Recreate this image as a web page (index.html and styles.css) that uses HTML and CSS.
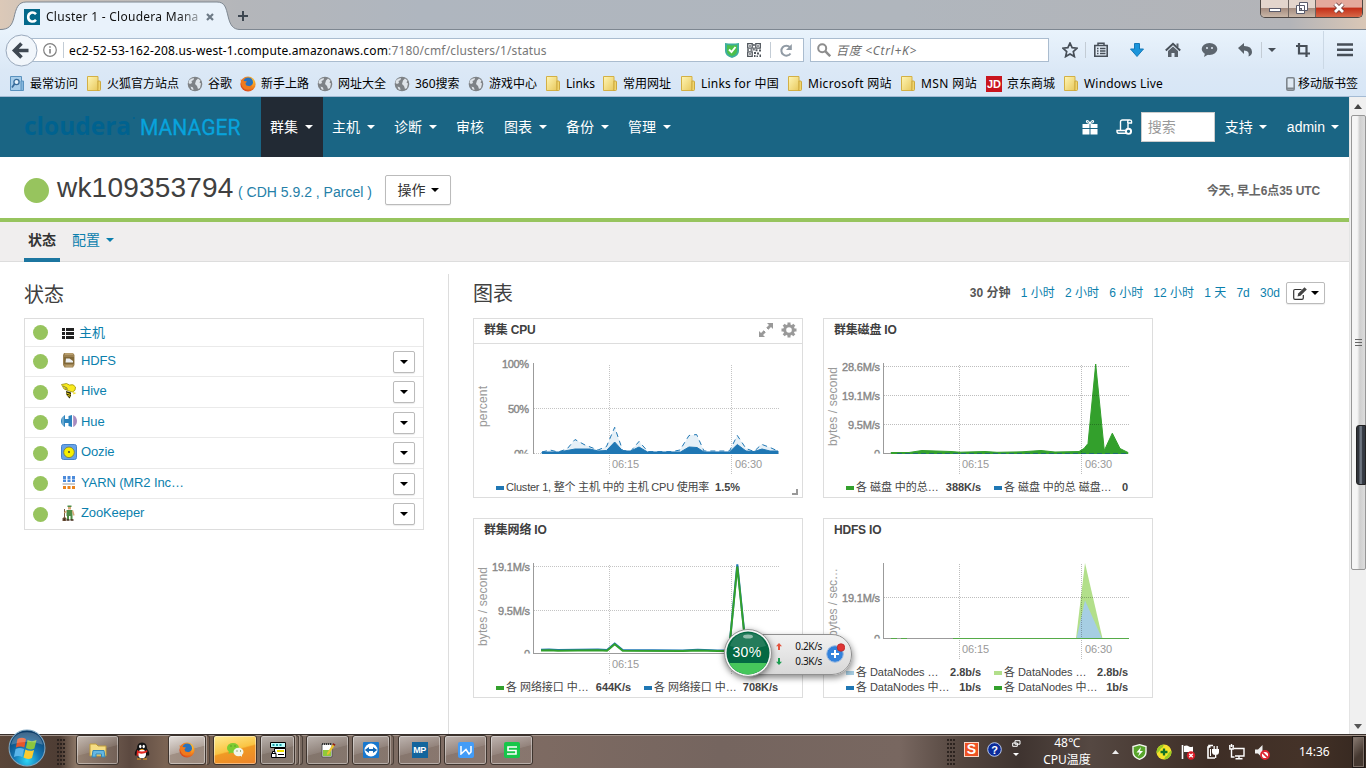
FILE: index.html
```html
<!DOCTYPE html>
<html lang="zh-CN">
<head>
<meta charset="utf-8">
<title>Cluster 1 - Cloudera Manager</title>
<link rel="stylesheet" href="styles.css">
</head>
<body>
<svg class="defs" width="0" height="0" aria-hidden="true">
  <defs>
    <linearGradient id="folderFill" x1="0" y1="0" x2="1" y2="1"><stop offset="0" stop-color="#fff6b5"/><stop offset="1" stop-color="#e8c85c"/></linearGradient>
    <radialGradient id="orb" cx=".5" cy=".85" r=".8"><stop offset="0" stop-color="#2fd5f5"/><stop offset=".45" stop-color="#1577b5"/><stop offset="1" stop-color="#0b3c68"/></radialGradient>
    <radialGradient id="foxFill" cx=".7" cy=".3" r=".8"><stop offset="0" stop-color="#ffd23a"/><stop offset=".5" stop-color="#f58a1f"/><stop offset="1" stop-color="#d6401a"/></radialGradient>
    <symbol id="folder" viewBox="0 0 16 16"><path d="M1.500.500h10.500v14H1.500z" fill="url(#folderFill)" stroke="#d3b045"/><path d="M12 5h1.500q1 0 1 1v7.500q0 1-1 1H11q1.500-.500 1-2z" fill="#f0d56d" stroke="#cda93f"/></symbol>
    <symbol id="globe" viewBox="0 0 16 16"><circle cx="8" cy="8" r="7.300" fill="#7e8286"/><path d="M2 4.500q2-2.500 5-2.500L6.500 4 4.500 5 5 7 3 8 1.500 7zM9 4.500l2-2 2.500 2-1 2 1.500 1-1 4.500-2 1-1-3-2-2zM3.500 10.500l2.500 1 .5 2.500-2-.8z" fill="#dfe4e9"/></symbol>
    <symbol id="fox" viewBox="0 0 16 16"><circle cx="8" cy="8" r="7.600" fill="url(#foxFill)"/><circle cx="8.200" cy="6.200" r="4.800" fill="#2a72bd"/><path d="M.6 3.200 4 5l3 .4-1.600 2 1 2.200 3.400.6 2.600-1.800q-.6 5-5.400 5.200Q1 13 .6 3.200z" fill="#f07a1c"/></symbol>
    <symbol id="caret" viewBox="0 0 8 4"><path d="M0 0h8L4 4z" fill="currentColor"/></symbol>
  </defs>
</svg>

<header class="titlebar">
  <div class="tab">
    <svg class="tab-shape" width="240" height="30" viewBox="0 0 240 30"><path d="M0 29.500c9 0 12-4 14-12 2-9 4-15.500 12-15.500h191c8 0 9 6 11 14 2 9 5 13.500 12 13.500V31H0z" fill="#e9f2fb" stroke="#7e8791"/></svg>
    <svg class="tab-ico" width="16" height="16" viewBox="0 0 16 16"><rect width="16" height="16" fill="#03688a"/><path d="M12 5.200Q9.800 2.800 7 3.700 4.200 4.800 4.200 8t2.800 4.300Q9.800 13.200 12 10.800" fill="none" stroke="#fff" stroke-width="2.600"/></svg>
    <span class="tab-text">Cluster 1 - Cloudera Mana</span>
    <svg width="8" height="8" viewBox="0 0 8 8"><path d="M1 1l6 6M7 1L1 7" stroke="#6d7a86" stroke-width="2.200"/></svg>
  </div>
  <svg class="newtab" width="10" height="10" viewBox="0 0 10 10"><path d="M5 0v10M0 5h10" stroke="#3d4650" stroke-width="2"/></svg>
  <div class="win-buttons">
    <span class="wb"><svg width="14" height="12"><rect x="1.500" y="6.500" width="11" height="3" fill="#fff" stroke="#595b6b"/></svg></span>
    <span class="wb"><svg width="12" height="12"><path d="M3.500.5h8v8h-8zM.5 3.500h8v8h-8z" fill="#fff" stroke="#595b6b"/><rect x="3.500" y="6.500" width="2" height="2" fill="#aaa" stroke="#595b6b"/></svg></span>
    <span class="wb close"><svg width="14" height="12" viewBox="0 0 14 12"><path d="M3 2l8 8M11 2l-8 8" stroke="#6b3a3a" stroke-width="4.400"/><path d="M3 2l8 8M11 2l-8 8" stroke="#fff" stroke-width="2.800"/></svg></span>
  </div>
</header>

<nav class="toolbar">
  <svg class="back" width="33" height="33" viewBox="0 0 33 33"><circle cx="16.500" cy="16.500" r="15.500" fill="#f1f6fb" stroke="#9aa9bc"/><path d="M16.500 9.500l-7 7 7 7M10 16.500h13.500" fill="none" stroke="#3f4852" stroke-width="3.600"/></svg>
  <div class="urlbar">
    <svg width="14" height="14" viewBox="0 0 14 14"><circle cx="7" cy="7" r="6.300" fill="none" stroke="#808080" stroke-width="1.200"/><path d="M7 6v4.500M7 3.200v1.600" stroke="#808080" stroke-width="1.600"/></svg>
    <i class="sep"></i>
    <span class="url">ec2-52-53-162-208.us-west-1.compute.amazonaws.com<span class="dim">:7180/cmf/clusters/1/status</span></span>
    <svg class="shield" width="14" height="15" viewBox="0 0 14 15"><path d="M0 0q7 1 14 0v8q0 5-7 7-7-2-7-7z" fill="#3fae9d"/><path d="M2 2q5 .8 10 0v6q0 3.600-5 5-5-1.400-5-5z" fill="#4cc04a"/><path d="M4 6.500l2.500 2.500L10.500 4" fill="none" stroke="#fff" stroke-width="1.900"/></svg>
    <svg class="qr" width="14" height="14" viewBox="0 0 14 14"><path d="M.7.7h4.500v4.500H.7zM8.800.7h4.500v4.500H8.800zM.7 8.800h4.500v4.500H.7z" fill="none" stroke="#50565c" stroke-width="1.300"/><path d="M2.200 2.200h1.600v1.600H2.200zM10.200 2.200h1.600v1.600h-1.600zM2.200 10.200h1.600v1.600H2.200zM6.200 1h1.500v2H6.200zM6.200 4.500h1.500v3H6.200zM0 6.300h2v1.400H0zM3.500 6.300h2v1.400h-2zM8.500 6.300h2v2h-2zM12 6.500h2v2h-2zM7 9h2v2H7zM10 9.500h2v2h-2zM12.500 11.500H14V14h-1.500zM7 12h1.500v2H7zM9.500 12.500H11V14H9.500z" fill="#50565c"/></svg>
    <i class="sep"></i>
    <svg class="reload" width="13" height="13" viewBox="0 0 13 13"><path d="M10.500 9.500A5 5 0 1 1 10 3.200" fill="none" stroke="#919ba5" stroke-width="2"/><path d="M11.800 0v6H6z" fill="#919ba5"/></svg>
  </div>
  <div class="searchbar">
    <svg width="14" height="14" viewBox="0 0 14 14"><circle cx="5.200" cy="5.200" r="4" fill="none" stroke="#8d8d8d" stroke-width="2"/><path d="M8.200 8.200l5 5" stroke="#8d8d8d" stroke-width="2.500"/></svg>
    <em>百度 &lt;Ctrl+K&gt;</em>
  </div>
  <div class="tools">
    <svg width="16" height="16" viewBox="0 0 16 16"><path d="M8 1l2.100 4.700 5 .5-3.800 3.400 1.100 5L8 12l-4.400 2.600 1.100-5L.9 6.200l5-.5z" fill="none" stroke="#474f58" stroke-width="1.700"/></svg>
    <i class="sep"></i>
    <svg width="16" height="16" viewBox="0 0 16 16"><path d="M1.800 3.500h12.400v10.700H1.800z" fill="#e3edf7" stroke="#474f58" stroke-width="1.600"/><path d="M5 3.500V1.200h6v2.300" stroke="#474f58" stroke-width="1.500" fill="none"/><path d="M4 6.500h1.500M7 6.500h5.500M4 9h1.500M7 9h5.500M4 11.500h1.500M7 11.500h5.500" stroke="#474f58" stroke-width="1.300"/></svg>
    <svg width="16" height="16" viewBox="0 0 16 16"><path d="M5.500 1.500h5V7h4L8 14.500 1.500 7h4z" fill="#1b95db" stroke="#1579b8"/></svg>
    <svg width="16" height="16" viewBox="0 0 16 16"><path d="M.8 8.500L8 1.800l7.200 6.700" fill="none" stroke="#474f58" stroke-width="2"/><path d="M3 9l5-4.500L13 9v6H9.500v-4h-3v4H3zM11.500 1.500h2V5h-2z" fill="#5a626b"/></svg>
    <svg width="17" height="16" viewBox="0 0 17 16"><ellipse cx="8.500" cy="7" rx="7.800" ry="6" fill="#5d666f"/><path d="M4 11l-1 4 5-3z" fill="#5d666f"/><circle cx="6" cy="6" r="1" fill="#e3edf7"/><circle cx="11" cy="6" r="1" fill="#e3edf7"/></svg>
    <svg width="16" height="16" viewBox="0 0 16 16"><path d="M1 6L7 1v3q8 0 8 6 0 3-3.500 4.500Q13 8.500 7 8.500V12z" fill="#59626b"/></svg>
    <i class="sep"></i>
    <svg width="8" height="4"><use href="#caret"/></svg>
    <svg width="16" height="16" viewBox="0 0 16 16"><path d="M4 1v10.500h11M1 4h10.500v11" fill="none" stroke="#474f58" stroke-width="2.200"/></svg>
    <i class="sep tall"></i>
    <svg width="16" height="14" viewBox="0 0 16 14"><path d="M0 1.500h16M0 6.800h16M0 12h16" stroke="#474f58" stroke-width="2.600"/></svg>
  </div>
</nav>

<nav class="bookmarks">
  <a><svg class="bi" viewBox="0 0 16 16"><path d="M1.500.5h11v14h-11z" fill="#a7cdea" stroke="#5a92bf"/><path d="M12 5h2.500v9.500H12z" fill="#84b6dc" stroke="#5a92bf"/><circle cx="7.500" cy="6" r="2.600" fill="#e6f3fc" stroke="#376b9a" stroke-width="1.300"/><path d="M5.500 8L3 11.500" stroke="#376b9a" stroke-width="1.700"/></svg>最常访问</a>
  <a><svg class="bi"><use href="#folder"/></svg>火狐官方站点</a>
  <a><svg class="bi"><use href="#globe"/></svg>谷歌</a>
  <a><svg class="bi"><use href="#fox"/></svg>新手上路</a>
  <a><svg class="bi"><use href="#globe"/></svg>网址大全</a>
  <a><svg class="bi"><use href="#globe"/></svg>360搜索</a>
  <a><svg class="bi"><use href="#globe"/></svg>游戏中心</a>
  <a><svg class="bi"><use href="#folder"/></svg>Links</a>
  <a><svg class="bi"><use href="#folder"/></svg>常用网址</a>
  <a><svg class="bi"><use href="#folder"/></svg>Links for 中国</a>
  <a><svg class="bi"><use href="#folder"/></svg>Microsoft 网站</a>
  <a><svg class="bi"><use href="#folder"/></svg>MSN 网站</a>
  <a><span class="jd">JD</span>京东商城</a>
  <a><svg class="bi"><use href="#folder"/></svg>Windows Live</a>
  <a class="mobile"><svg width="9" height="14" viewBox="0 0 9 14"><rect x=".8" y=".8" width="7.400" height="12.400" rx="1.200" fill="#dfe9f2" stroke="#7e868d" stroke-width="1.600"/><path d="M1 11.500h7" stroke="#7e868d" stroke-width="2"/></svg>移动版书签</a>
</nav>

<main class="viewport">
  <div class="page">
    <div class="cm-nav">
      <svg class="logo" width="224" height="44" viewBox="0 0 224 44"><text class="logo-a" x="0" y="30" textLength="107" lengthAdjust="spacingAndGlyphs">cloudera</text><circle cx="110" cy="13" r="1" fill="#00628f"/><text class="logo-b" x="116" y="30" textLength="100.500" lengthAdjust="spacingAndGlyphs">MANAGER</text></svg>
      <ul class="menu">
        <li class="on">群集<svg class="c"><use href="#caret"/></svg></li>
        <li>主机<svg class="c"><use href="#caret"/></svg></li>
        <li>诊断<svg class="c"><use href="#caret"/></svg></li>
        <li class="plain">审核</li>
        <li>图表<svg class="c"><use href="#caret"/></svg></li>
        <li>备份<svg class="c"><use href="#caret"/></svg></li>
        <li>管理<svg class="c"><use href="#caret"/></svg></li>
      </ul>
      <div class="cm-right">
        <svg width="16" height="16" viewBox="0 0 16 16"><path d="M.5 5h7v4h-7zM8.500 5h7v4h-7zM.5 10h7v5.500h-7zM8.500 10h7v5.500h-7z" fill="#fff"/><path d="M8 4.500Q4 4 4.500 2 6 .5 8 4.500 10 .5 11.500 2 12 4 8 4.500z" fill="none" stroke="#fff" stroke-width="1.200"/></svg>
        <svg width="17" height="16" viewBox="0 0 17 16"><path d="M4.500 11V3q0-2 2-2h7.500q2 0 1.500 3H12v5M6.500 1h6q-1 1-.8 3M10 14.300H2.500Q.8 14 1 11.500h8" fill="none" stroke="#fff" stroke-width="1.400"/><circle cx="12.500" cy="12.300" r="2.600" fill="none" stroke="#fff" stroke-width="1.900"/></svg>
        <span class="cm-search">搜索</span>
        <span class="user">支持<svg class="c"><use href="#caret"/></svg></span>
        <span class="user">admin<svg class="c"><use href="#caret"/></svg></span>
      </div>
    </div>

    <div class="title-row">
      <i class="dot big"></i>
      <h1>wk109353794</h1>
      <span class="ver">( <a>CDH 5.9.2</a> , <a>Parcel</a> )</span>
      <button class="btn action">操作<svg class="c"><use href="#caret"/></svg></button>
      <span class="clock">今天, 早上6点35 UTC</span>
    </div>

    <div class="tabs"><b>状态</b><a>配置<svg class="c"><use href="#caret"/></svg></a></div>

    <div class="content">
      <section class="side">
        <h2>状态</h2>
        <div class="services">
          <div class="svc host"><i class="dot"></i><svg width="16" height="16" viewBox="0 0 16 16"><path d="M1 3h3v3H1zM5 3h8v3H5zM1 7h3v3H1zM5 7h8v3H5zM1 11h3v3H1zM5 11h8v3H5z" fill="#222"/></svg><a>主机</a></div>
          <div class="svc"><i class="dot"></i><svg width="16" height="16" viewBox="0 0 16 16"><path d="M3 1h9l1.500 2v10L12 15.500H3.500L2 13V3z" fill="#9b8151"/><path d="M4 2h8M4.500 14h7" stroke="#c0a576" stroke-width="1.300"/><path d="M3 5h10v7H3z" fill="#806838"/><path d="M4.500 10.500l.5-4h3.500l3.500 2.500v1.500z" fill="#eceff2"/></svg><a>HDFS</a><button class="btn drop"><svg class="c"><use href="#caret"/></svg></button></div>
          <div class="svc"><i class="dot"></i><svg width="16" height="16" viewBox="0 0 16 16"><path d="M.5 1.500l5-1 3 1.500q4-1.500 6 2 .5 4-3 5L8 8 3 6z" fill="#f9ea1d" stroke="#8f8506" stroke-width=".7"/><path d="M2 3l4 2M4 6l3 0" stroke="#555" stroke-width=".7"/><path d="M5 8l5 1.500V13l-1.500 2.500L5.500 12z" fill="#292500"/><path d="M5.500 10l4 1.500M6.500 12.500l3 .8" stroke="#f6de1c" stroke-width="1"/><path d="M12 9l3.500 1-3 1.500z" fill="#efdc30"/></svg><a>Hive</a><button class="btn drop"><svg class="c"><use href="#caret"/></svg></button></div>
          <div class="svc"><i class="dot"></i><svg width="16" height="16" viewBox="0 0 16 16"><path d="M4 2v4h3.500V3L11 2v12l-3.500-1v-3H4v4Q0 12 0 8t4-6z" fill="#2b83bd"/><path d="M12.200 2q3.800 2 3.800 6t-3.800 6z" fill="#a78bc0"/><path d="M2 3v10" stroke="#fff" stroke-width=".6"/></svg><a>Hue</a><button class="btn drop"><svg class="c"><use href="#caret"/></svg></button></div>
          <div class="svc"><i class="dot"></i><svg width="16" height="16" viewBox="0 0 16 16"><rect x=".5" y=".5" width="15" height="15" rx="2" fill="#67a2e8" stroke="#4483ca"/><circle cx="8" cy="8.300" r="5.300" fill="#f8f000" stroke="#6e7540" stroke-width=".8"/><circle cx="8" cy="8" r=".9" fill="#333"/></svg><a>Oozie</a><button class="btn drop"><svg class="c"><use href="#caret"/></svg></button></div>
          <div class="svc"><i class="dot"></i><svg width="16" height="16" viewBox="0 0 16 16"><path d="M2 2h3v3H2zM6.500 2h3v3h-3zM11 2h3v3h-3zM2 5.500h3V8H2zM6.500 5.500h3V8h-3zM11 5.500h3V8h-3z" fill="#4a8adb"/><path d="M1.500 10h12.500" stroke="#999"/><path d="M2 12h3v3H2zM6.500 12h3v3h-3zM11 12h3v3h-3z" fill="#eb841c"/></svg><a>YARN (MR2 Inc…</a><button class="btn drop"><svg class="c"><use href="#caret"/></svg></button></div>
          <div class="svc"><i class="dot"></i><svg width="16" height="16" viewBox="0 0 16 16"><path d="M3.500 4v9M2 13h3l-.5 3H2z" stroke="#76573a" fill="#3a2c22"/><path d="M6.500.5h4v1.500h-4zM5.500 5h6v6h-6zM6 10h2v5H6zM9.500 10h2v5h-2z" fill="#4e8b45"/><path d="M7 2h3v2.500H7z" fill="#d8a878"/><path d="M5.500 6L3.500 8M11.500 5.500l1.500 5" stroke="#d8a878" stroke-width="1.400"/><path d="M5.500 15h3M9.500 15h3" stroke="#442c1c" stroke-width="1.500"/></svg><a>ZooKeeper</a><button class="btn drop"><svg class="c"><use href="#caret"/></svg></button></div>
        </div>
      </section>

      <section class="charts">
        <div class="charts-head">
          <h2>图表</h2>
          <div class="ranges"><b>30 分钟</b><a>1 小时</a><a>2 小时</a><a>6 小时</a><a>12 小时</a><a>1 天</a><a>7d</a><a>30d</a></div>
          <button class="btn edit"><svg width="15" height="13" viewBox="0 0 15 13"><path d="M8.500 2.500H2q-1.300 0-1.300 1.300V11q0 1.300 1.300 1.300h7q1.300 0 1.300-1.300V8" fill="none" stroke="#333" stroke-width="1.200"/><path d="M4.500 9.500l.7-3L11.500.3l2.300 2.200-6.300 6.300z" fill="#444"/></svg><svg class="c"><use href="#caret"/></svg></button>
        </div>
        <div class="cards">
          <article class="card">
            <header class="lined"><span>群集 CPU</span>
              <svg width="16" height="16" viewBox="0 0 16 16"><path d="M9 1h6v6l-2-2-3 3-2-2 3-3zM7 15H1V9l2 2 3-3 2 2-3 3z" fill="#999"/><path d="M5 7l4 4M7 5l4 4" stroke="#fff"/></svg>
              <svg width="16" height="16" viewBox="0 0 16 16"><circle cx="8" cy="8" r="4.300" fill="none" stroke="#999" stroke-width="3"/><path d="M8 .5V3M8 13v2.500M.5 8H3M13 8h2.500M2.700 2.700l1.800 1.800M11.500 11.500l1.800 1.800M2.700 13.300l1.800-1.800M11.500 4.500l1.800-1.800" stroke="#999" stroke-width="3"/></svg>
            </header>
            <svg class="plot" width="328" height="136" viewBox="474 344 328 136">
              <clipPath id="c1"><path d="M474 344h328v109.500H474z"/></clipPath>
              <path class="grid" d="M534 408.500h245M534 453.500h245M609.500 365v109M731.500 365v109"/><path class="axis" d="M533.500 363v91"/>
              <path d="M542 452l8-2 8 2 9-3 8-9.500 10 5.500 13 5 8.500-3.500 8.200-19.200 8 23.200 8 .7 8.300-9.700 9 10.100h24l8-1.600 9-14.500 7.600-1 7.400 16.500h25.500l7.800-15.500 8.700 13 8 3 7.600-7.200 8.400 3.200 8 3.500v2.500H542z" fill="#e6f0f7"/>
              <path d="M542 452l8-2 8 2 9-3 8-9.500 10 5.500 13 5 8.500-3.500 8.200-19.200 8 23.200 8 .7 8.300-9.700 9 10.100h24l8-1.600 9-14.500 7.600-1 7.400 16.500h25.500l7.800-15.500 8.700 13 8 3 7.600-7.200 8.400 3.200 8 3.500" fill="none" stroke="#1f77b4" stroke-dasharray="5 4"/>
              <path d="M542 453.500V452h17l16-3h15l8 2 8.500-.5 8.200-8.500 8 9h8l8.300-4 8.500 5h33l8.500-5 8 .5 7 4.500h25.500l7.800-7.500 8.700 6.500 8 .5 8-2.500 8 2h8v2.500z" fill="#1f77b4" stroke="#1f77b4"/>
              <g clip-path="url(#c1)"><text class="yl" x="502" y="367.500" textLength="27">100%</text><text class="yl" x="508" y="412.500" textLength="21">50%</text><text class="yl" x="514" y="457.500" textLength="15">0%</text></g>
              <text class="xl" x="612" y="467.500" textLength="27">06:15</text><text class="xl" x="735" y="467.500" textLength="27">06:30</text>
              <text class="vt" transform="translate(487 427) rotate(-90)" textLength="41">percent</text>
            </svg>
            <div class="legend-one"><i class="k blue"></i><span>Cluster 1, 整个 主机 中的 主机 CPU 使用率</span><b>1.5%</b><svg class="grip" width="6" height="6"><path d="M5 0v5H0" fill="none" stroke="#999" stroke-width="2"/></svg></div>
          </article>
          <article class="card">
            <header><span>群集磁盘 IO</span></header>
            <svg class="plot" width="328" height="136" viewBox="824 344 328 136">
              <clipPath id="c2"><path d="M824 344h328v109.500H824z"/></clipPath>
              <path d="M891 453.500v-1l18 0 13-2 14 .5 15 .5 9 .7 25-.7 12 .8 25-.5 19-1.300 14 1.500 24-.5 5-3 4-5 7.700-79.500 8.600 86.500 8-17.300 7.700 15.300 8 4v1z" fill="#33a02c" stroke="#33a02c"/>
              <path d="M897 453.500h231" stroke="#1f6d70" stroke-dasharray="5 3"/>
              <path class="grid over" d="M884 366.500h245M884 395.500h245M884 424.500h245M959.500 365v109M1081.500 365v109"/><path class="axis" d="M883.500 363v91M883 453.500h8"/>
              <g clip-path="url(#c2)"><text class="yl" x="842" y="370.500" textLength="38">28.6M/s</text><text class="yl" x="842" y="399.500" textLength="38">19.1M/s</text><text class="yl" x="848" y="428.500" textLength="32">9.5M/s</text><text class="yl" x="874" y="457.500">0</text></g>
              <text class="xl" x="962" y="467.500" textLength="27">06:15</text><text class="xl" x="1085" y="467.500" textLength="27">06:30</text>
              <text class="vt" transform="translate(837 446) rotate(-90)" textLength="79">bytes / second</text>
            </svg>
            <div class="legend"><div><i class="k green"></i><span>各 磁盘 中的总…</span><b>388K/s</b></div><div><i class="k blue"></i><span>各 磁盘 中的总 磁盘…</span><b>0</b></div></div>
          </article>
          <article class="card">
            <header><span>群集网络 IO</span></header>
            <svg class="plot" width="328" height="136" viewBox="474 544 328 136">
              <clipPath id="c3"><path d="M474 544h328v109.500H474z"/></clipPath>
              <path class="grid" d="M534 566.500h245M534 610.500h245M609.500 565v109M731.500 565v109"/><path class="axis" d="M533.500 563v91M533 653.500h200"/>
              <path d="M541 650.500l8-.3 9 .6 40-.5 9 .5 7.700-6.500 8 6.500 60 .3 15-.6 20 .6h11.300l8.300-86.100 8.200 80 10 5.500h22" fill="none" stroke="#1f77b4" stroke-width="2" transform="translate(0 -.7)"/>
              <path d="M541 650.500l8-.3 9 .6 40-.5 9 .5 7.700-6.500 8 6.500 60 .3 15-.6 20 .6h11.300l8.300-84.600 8.200 79 10 5h22" fill="none" stroke="#33a02c" stroke-width="2"/>
              <g clip-path="url(#c3)"><text class="yl" x="492" y="570.500" textLength="38">19.1M/s</text><text class="yl" x="498" y="614.500" textLength="32">9.5M/s</text><text class="yl" x="524" y="657.500">0</text></g>
              <text class="xl" x="612" y="667.500" textLength="27">06:15</text>
              <text class="vt" transform="translate(487 646) rotate(-90)" textLength="79">bytes / second</text>
            </svg>
            <div class="legend"><div><i class="k green"></i><span>各 网络接口 中…</span><b>644K/s</b></div><div><i class="k blue"></i><span>各 网络接口 中…</span><b>708K/s</b></div></div>
          </article>
          <article class="card">
            <header><span>HDFS IO</span></header>
            <svg class="plot" width="328" height="121" viewBox="824 544 328 121">
              <clipPath id="c4"><path d="M824 544h328v94.500H824z"/></clipPath>
              <path d="M1076 638.500l9-75.500 17.500 75.500z" fill="#b2df8a"/><path d="M1076.500 638.500l8.500-38 5 11 12 27z" fill="#a6cee3"/>
              <path class="grid over" d="M884 597.500h245M959.500 564v95M1081.500 564v95"/><path class="axis" d="M883.500 563v76M883 638.500h70"/>
              <path d="M891 638.500h6M901 638.500h6M953 638.500h176" stroke="#55ab48"/>
              <g clip-path="url(#c4)"><text class="yl" x="842" y="601.500" textLength="38">19.1M/s</text><text class="yl" x="874" y="642.500">0</text></g>
              <text class="xl" x="962" y="652.500" textLength="27">06:15</text><text class="xl" x="1085" y="652.500" textLength="27">06:30</text>
              <text class="vt" transform="translate(837 637) rotate(-90)" textLength="69">bytes / sec…</text>
            </svg>
            <div class="legend"><div><i class="k lblue"></i><span>各 DataNodes …</span><b>2.8b/s</b></div><div><i class="k lgreen"></i><span>各 DataNodes …</span><b>2.8b/s</b></div><div><i class="k blue"></i><span>各 DataNodes 中…</span><b>1b/s</b></div><div><i class="k green"></i><span>各 DataNodes 中…</span><b>1b/s</b></div></div>
          </article>
        </div>
      </section>
    </div>
  </div>
  <div class="scroll"><svg width="8" height="5"><path d="M4 0l4 5H0z" fill="#444"/></svg><div class="thumb"><i></i><i></i><i></i></div><svg width="8" height="5"><path d="M0 0h8L4 5z" fill="#555"/></svg></div>
</main>

<footer class="taskbar">
  <svg class="start" width="38" height="38" viewBox="0 0 36 36"><circle cx="18" cy="18" r="17" fill="url(#orb)" stroke="#7fa7c2" stroke-width="1"/><path d="M9 9.500q4-2.500 8 0l-1.500 8q-4-2-8 0z" fill="#e8572a"/><path d="M18.500 10.500q4 2 8.500 0l-2 8q-4 2-8-.5z" fill="#8cc63e"/><path d="M7.200 19q4-2 8 0l-1.600 7.500q-4-2-8 0z" fill="#5ab5ea"/><path d="M16.500 19.500q4 2.200 8.200.4l-2 7.600q-4 2-8-.5z" fill="#fccb30"/><path d="M3 15Q5 3 18 3t15 12q-14-6-30 0z" fill="#fff" opacity=".22"/></svg>
  <i class="dots"></i>
  <span class="task t1"><svg width="18" height="16" viewBox="0 0 18 16"><path d="M1 2h6l2 2h8v10H1z" fill="#f5dd83" stroke="#bf9c3d"/><path d="M4 8.500h11l1 6.500h-3.500v-3H7v3H3z" fill="#65b8e2" stroke="#3586b5"/></svg></span>
  <svg class="qq" width="18" height="18" viewBox="0 0 18 18"><path d="M9 .5q5 0 5 6 3 4 2 7h-2l-2 3H6l-2-3H2q-1-3 2-7 0-6 5-6z" fill="#151515"/><ellipse cx="9" cy="12" rx="4" ry="4.200" fill="#fff"/><path d="M4 8q5 3 10 0l.5 2Q9 13 5.500 11v3l-2-.5z" fill="#e0261f"/><ellipse cx="7.300" cy="4.500" rx="1.200" ry="1.700" fill="#fff"/><ellipse cx="10.700" cy="4.500" rx="1.200" ry="1.700" fill="#fff"/><path d="M6.500 7h5L9 8.200zM4 16.500h4v1H4zM10 16.500h4v1h-4z" fill="#f7a31c"/></svg>
  <span class="task t3 lit"><svg width="16" height="16"><use href="#fox"/></svg></span><i class="edge"></i>
  <span class="task t4 wechat"><svg width="18" height="16" viewBox="0 0 18 16"><ellipse cx="7" cy="6" rx="6" ry="5" fill="#7dcc31"/><path d="M3 9l-.5 3L6 10z" fill="#7dcc31"/><ellipse cx="12.500" cy="10" rx="5" ry="4.200" fill="#f2f5e9"/><path d="M14 13l2 2v-3z" fill="#f2f5e9"/><path d="M4.500 4h1M8.500 4h1M10.500 9h1M14 9h1" stroke="#456c29"/></svg></span>
  <span class="task t5"><svg width="16" height="16" viewBox="0 0 16 16"><path d="M.5.500h15v5H.500z" fill="#bff" stroke="#000"/><path d="M2.500 3h2M6 3h2M9.500 3h2" stroke="#1d9ea4" stroke-width="2"/><path d="M4.500 6.500h11v9h-11z" fill="#fff" stroke="#000"/><path d="M7 9h7" stroke="#f0e000" stroke-width="2"/><path d="M8 12.500h6" stroke="#000"/><path d="M1.500 11.500h4.500v4H1.500zM2.500 11.500v-2h2.500v2" fill="#fff" stroke="#000"/></svg></span><i class="edge"></i><i class="edge"></i>
  <span class="task t6"><svg width="16" height="16" viewBox="0 0 16 16"><path d="M2 2h10v13H2z" fill="#fff" stroke="#555"/><path d="M3 8h8v6H3z" fill="#8fc93a"/><path d="M2 2h10" stroke="#333" stroke-width="2" stroke-dasharray="1 1"/><path d="M7 11l6-9 2 1-6 9-2 1z" fill="#e9c22d"/><path d="M13 1l2.500 1.500-1 1.500L12.500 2.500z" fill="#8f1f18"/></svg></span>
  <span class="task t7"><svg width="16" height="16" viewBox="0 0 16 16"><rect width="16" height="16" rx="1" fill="#1878ce"/><circle cx="8" cy="8" r="6.500" fill="#fff"/><path d="M1.800 8L6 5v2h4V5l4.200 3L10 11V9H6v2z" fill="#1268b6"/></svg></span><i class="edge"></i>
  <span class="task t8"><span class="app mp">MP</span></span>
  <span class="task t9"><span class="app wps"><svg width="12" height="9" viewBox="0 0 12 9"><path d="M1 0v8L6 3.500 9 8l2-2V0" fill="none" stroke="#fff" stroke-width="1.500"/></svg></span></span>
  <span class="task t10"><span class="app s"><svg width="10" height="9" viewBox="0 0 10 9"><path d="M10 1H1v3.500h8V8H0" fill="none" stroke="#fff" stroke-width="1.600"/></svg></span></span>
  <i class="dots right"></i>
  <span class="sogou">S</span>
  <svg class="help" width="15" height="15" viewBox="0 0 15 15"><circle cx="7.500" cy="7.500" r="6.800" fill="#0b2c9c" stroke="#b8c8ed"/><text class="q" x="7.500" y="11.500" text-anchor="middle">?</text></svg>
  <svg class="lang" width="9" height="17" viewBox="0 0 9 17"><path d="M3 .7h5v3.500H3zM.7 3h4.600v3.300H.7z" fill="#3b3430" stroke="#fff"/><path d="M1 13h6l-3 3z" fill="#fff"/></svg>
  <span class="temp">48℃<br>CPU温度</span>
  <div class="tray">
    <svg width="7" height="4"><path d="M0 4l3.500-4L7 4z" fill="#eee"/></svg>
    <svg width="15" height="16" viewBox="0 0 15 16"><path d="M7.500.7L14 2.500V8q0 5-6.500 7.300Q1 13 1 8V2.500z" fill="#58a52b" stroke="#f2f7ee" stroke-width="1.400"/><path d="M9 3L4.500 8.500h3L6 12.500 11 7H8z" fill="#fff"/></svg>
    <svg width="16" height="16" viewBox="0 0 16 16"><circle cx="8" cy="8" r="7.500" fill="#f7e02d"/><path d="M8 .5a7.500 7.500 0 0 0-7.300 9L6 5zM8 15.500a7.500 7.500 0 0 0 7.300-9L10 11z" fill="#9ccc25"/><circle cx="8" cy="8" r="4.500" fill="#fbea26"/><path d="M8 4.500v7M4.500 8h7" stroke="#137127" stroke-width="2.300"/></svg>
    <svg width="16" height="16" viewBox="0 0 16 16"><path d="M2.500 1v14" stroke="#fff" stroke-width="1.600"/><path d="M4 2q3-1 5 .5 2 1 4 0V8H4z" fill="#fff"/><circle cx="11" cy="11.500" r="4.200" fill="#d81d27"/><path d="M9.200 9.700l3.600 3.600M12.800 9.700l-3.600 3.600" stroke="#fff" stroke-width="1.400"/></svg>
    <svg width="16" height="16" viewBox="0 0 16 16"><path d="M5.500 3H3v11h7M4 3V1.500h4" fill="none" stroke="#fff" stroke-width="1.600"/><path d="M7 5h7v3q0 3-3.500 3T7 8zM8.500 2h1.300v3H8.500zM11.500 2h1.300v3h-1.300zM10 11h1.300v3H10zM5 5h1v7H5z" fill="#fff"/></svg>
    <svg width="16" height="16" viewBox="0 0 16 16"><path d="M5 4.500h10v7.500H6M10 12v2.500M6.500 14.700h7M.8 1v4h3.400V1M2.500 0v3M2.500 5v8h3" fill="none" stroke="#fff" stroke-width="1.400"/></svg>
    <svg width="16" height="16" viewBox="0 0 16 16"><path d="M1 5.500h3L8.500 1v13L4 9.500H1z" fill="#eee"/><circle cx="11" cy="11" r="4" fill="#fff" stroke="#dd2531" stroke-width="1.800"/><path d="M8.300 8.300l5.400 5.400" stroke="#dd2531" stroke-width="1.700"/></svg>
  </div>
  <span class="time">14:36</span>
  <i class="peek"></i>
</footer>

<aside class="monitor">
  <svg class="ball" width="48" height="48" viewBox="0 0 48 48"><circle cx="24" cy="24" r="23.500" fill="#f6f6f6" stroke="#969696"/><circle cx="24" cy="24" r="21.500" fill="#046943"/><path d="M5 34h38A21.500 21.500 0 0 1 5 34z" fill="#46c65b"/><path d="M6 17Q10 4 24 4t18 13q-18 5-36 0z" fill="#fff" opacity=".13"/><ellipse cx="24" cy="7.500" rx="5" ry="2" fill="#fff" opacity=".5"/></svg>
  <span class="pct">30%</span>
  <div class="rates"><span><svg width="6" height="7" viewBox="0 0 6 7"><path d="M0 3.200L3 0l3 3.200H4V7H2V3.200z" fill="#e4543d"/></svg>0.2K/s</span><span><svg width="6" height="7" viewBox="0 0 6 7"><path d="M0 3.800L3 7l3-3.200H4V0H2v3.800z" fill="#1b9d50"/></svg>0.3K/s</span></div>
  <svg class="plus" width="19" height="20" viewBox="0 0 19 20"><circle cx="9" cy="11" r="8.300" fill="#3282dc" stroke="#9dbbe0"/><path d="M9 7v8M5 11h8" stroke="#fff" stroke-width="2"/><circle cx="15" cy="4.500" r="3.800" fill="#df3535" stroke="#b32222" stroke-width=".7"/></svg>
</aside>
<i class="side-handle"></i>
</body>
</html>
```

FILE: styles.css
```css
* { box-sizing: border-box; }
body {
  margin: 0; width: 1366px; height: 768px; overflow: hidden; position: relative;
  display: flex; flex-direction: column; background: #fff;
  font: 14px/20px "Liberation Sans", "Noto Sans CJK SC", sans-serif; color: #333;
}
svg { display: block; flex: none; }
.defs { position: absolute; }
i { font-style: normal; }
h1, h2, ul { margin: 0; padding: 0; font-weight: 400; }
.c { width: 8px; height: 4px; }

/* browser chrome */
.titlebar { flex: none; height: 30px; display: flex; border-bottom: 1px solid #7e8791; background: linear-gradient(90deg, #dcc9b8 0, #c5bfb9 60px, #b4b6ba 240px, #afb6bf 420px, #b0b6bd 900px, #b3b4b8 1290px, #dac7b6 1366px); }
.tab { position: relative; width: 240px; height: 30px; display: flex; align-items: center; padding: 3px 0 0 24px; }
.tab-shape { position: absolute; left: 0; top: 0; }
.tab > :not(.tab-shape) { position: relative; }
.tab-text { width: 154px; margin: 0 6px 0 6px; overflow: hidden; white-space: nowrap; font: 12px/20px "Noto Sans", sans-serif; letter-spacing: .27px; color: #111; -webkit-mask-image: linear-gradient(90deg, #000 132px, rgba(0,0,0,.3)); mask-image: linear-gradient(90deg, #000 132px, rgba(0,0,0,.3)); }
.newtab { margin: 11px 0 0 -2px; }
.win-buttons { margin-left: auto; margin-right: 3px; width: 103px; height: 18px; display: flex; border: 1px solid #4d4744; border-top: 0; border-radius: 0 0 5px 5px; overflow: hidden; }
.wb { width: 28px; display: flex; align-items: center; justify-content: center; border-right: 1px solid #6d6460; background: linear-gradient(#e3d5cc 45%, #a58d80 50%, #c9b6a7); padding-bottom: 2px; }
.wb:nth-child(2) { width: 27px; }
.close { flex: 1; border: 0; background: linear-gradient(#e4a99c 40%, #c4301a 50%, #d76848); }
.toolbar { flex: none; height: 40px; display: flex; align-items: center; background: linear-gradient(#e9f3fc, #dbe8f6); padding-left: 5px; color: #474f58; }
.back { position: relative; z-index: 1; }
.urlbar { width: 774px; height: 24px; margin-left: -8px; padding-left: 12px; border: 1px solid #aabccf; background: #fff; display: flex; align-items: center; }
.sep { width: 1px; height: 16px; background: #c3ccd5; }
.urlbar .sep { margin: 0 5px 0 6px; }
.url { width: 656px; padding-top: 1px; white-space: nowrap; font: 12px/20px "Noto Sans", sans-serif; letter-spacing: .15px; color: #000; }
.dim { color: #777; }
.qr { margin: 0 3px 0 8px; }
.reload { margin-left: 4px; }
.searchbar { width: 239px; height: 24px; margin-left: 6px; padding-left: 6px; border: 1px solid #aabccf; background: #fff; display: flex; align-items: center; gap: 5px; color: #6f6f6f; font: 12px/20px "Noto Sans", "Noto Sans CJK SC", sans-serif; letter-spacing: .7px; }
.searchbar em { padding-top: 1px; }
.tools { display: flex; align-items: center; margin-left: 13px; height: 40px; }
.tools > :nth-child(2) { margin: 0 7px; }
.tools > :nth-child(4), .tools > :nth-child(5), .tools > :nth-child(6) { margin-left: 20px; }
.tools > :nth-child(7) { margin-left: 19px; }
.tools > :nth-child(8) { margin: 0 6px 0 8px; }
.tools > :nth-child(10) { margin-left: 19px; }
.tools .tall { height: 38px; margin: 0 13px 0 12px; background: #cbd8e5; }
.bookmarks { flex: none; height: 27px; display: flex; align-items: center; padding: 1px 0 0 9px; background: linear-gradient(#dbe8f6, #d7e6f6); border-bottom: 1px solid #a4bbd4; font: 12px/22px "Noto Sans", "Noto Sans CJK SC", sans-serif; color: #000; white-space: nowrap; }
.bookmarks a { display: flex; align-items: center; gap: 5px; flex: none; }
.bi { width: 16px; height: 16px; }
.bookmarks a:nth-child(1) { width: 77px; }
.bookmarks a:nth-child(2) { width: 101px; }
.bookmarks a:nth-child(3) { width: 53px; }
.bookmarks a:nth-child(4), .bookmarks a:nth-child(5) { width: 77px; }
.bookmarks a:nth-child(6) { width: 74px; }
.bookmarks a:nth-child(7) { width: 77px; }
.bookmarks a:nth-child(8) { width: 57px; }
.bookmarks a:nth-child(9) { width: 78px; }
.bookmarks a:nth-child(10) { width: 107px; letter-spacing: .2px; }
.bookmarks a:nth-child(11) { width: 113px; letter-spacing: .3px; }
.bookmarks a:nth-child(12) { width: 86px; letter-spacing: .4px; }
.bookmarks a:nth-child(13) { width: 77px; }
.bookmarks a:nth-child(14) { letter-spacing: .2px; }
.bookmarks .mobile { margin-left: auto; margin-right: 8px; gap: 3px; }
.jd { width: 16px; height: 16px; background: #c9151e; color: #fff; font: bold 11px/16px "Liberation Sans", sans-serif; text-align: center; }

/* Cloudera Manager page */
.viewport { flex: none; height: 637px; display: flex; }
.page { width: 1349px; height: 637px; display: flex; flex-direction: column; }
.cm-nav { height: 60px; flex: none; display: flex; align-items: center; background: #1a6584; color: #fff; }
.logo { margin: -1px 0 0 24px; width: 224px; }
.logo-a { font: 700 25px "Open Sans", sans-serif; fill: #00628f; }
.logo-b { font: 400 22px Roboto, sans-serif; fill: #08a3dc; stroke: #08a3dc; stroke-width: .3px; }
.menu { display: flex; height: 60px; margin-left: 13px; list-style: none; }
.menu li { width: 62px; padding-left: 9px; display: flex; align-items: center; gap: 7px; }
.menu .plain { width: 48px; }
.menu .on { background: #222a34; }
.cm-right { margin-left: auto; display: flex; align-items: center; padding-right: 10px; }
.cm-right > svg:nth-child(2) { margin: 0 8px 0 18px; }
.cm-search { width: 74px; height: 30px; padding-left: 6px; border: 1px solid #ccc; background: #fff; color: #999; line-height: 29px; margin-right: 10px; }
.user { display: flex; align-items: center; gap: 6px; margin-right: 20px; }
.user + .user { margin-right: 0; }
.title-row { flex: none; height: 65px; border-bottom: 4px solid #97c45e; padding: 5px 29px 0 24px; display: flex; align-items: center; }
.dot { flex: none; width: 15px; height: 15px; border-radius: 50%; background: #97c45e; }
.dot.big { width: 25px; height: 25px; margin-right: 8px; }
h1 { font-size: 28px; line-height: 36px; letter-spacing: .2px; margin-top: -4px; width: 181px; color: #404040; }
.ver { color: #2580a8; width: 147px; margin-top: 4px; letter-spacing: 0; white-space: nowrap; }
.btn { border: 1px solid #bbb; border-radius: 2px; background: #fff; box-shadow: 0 1px 1px rgba(0,0,0,.08); padding: 0; display: flex; align-items: center; justify-content: center; color: #000; font: inherit; }
.action { width: 66px; height: 30px; gap: 5px; font-size: 14px; color: #333; }
.action .c { color: #000; }
.clock { margin-left: auto; padding-top: 2px; font-size: 12px; font-weight: 700; color: #666; letter-spacing: -.1px; }
.tabs { flex: none; height: 40px; background: #f0eeee; border-bottom: 1px solid #ddd; display: flex; padding-left: 24px; line-height: 36px; }
.tabs b { width: 36px; height: 40px; text-align: center; border-bottom: 4px solid #1c76a0; }
.tabs a { display: flex; align-items: center; gap: 6px; height: 36px; margin-left: 12px; color: #0b7fad; }
.content { flex: 1; display: flex; padding-top: 12px; }
.side { width: 449px; padding: 9px 24px 0; border-right: 1px solid #ddd; }
h2 { font-size: 20px; line-height: 24px; color: #404040; }
.services { margin-top: 11px; border: 1px solid #ddd; display: grid; grid-template-rows: 27px 30px 31px 30px 31px 30px 31px; height: 212px; }
.svc { display: flex; align-items: center; padding: 0 8px; border-top: 1px solid #eaeaea; }
.svc:first-child { border-top: 0; }
.svc > svg { margin: -3px 4px 0 13px; }
.host > svg { margin: 0 2px 0 13px; }
.svc a { color: #0b7fad; font-size: 13px; letter-spacing: -.12px; margin-top: -2px; }
.host a { margin-top: 0; }
.drop { width: 22px; height: 22px; margin-left: auto; }
.charts { flex: 1; padding: 8px 24px 0; }
.charts-head { display: flex; align-items: center; height: 24px; margin-bottom: 12px; }
.ranges { margin: -2px 0 0 auto; display: flex; gap: 10.2px; font-size: 12px; color: #555; }
.ranges a { color: #0b7fad; }
.edit { width: 39px; height: 22px; gap: 3px; margin: -2px 0 0 6px; }
.cards { width: 680px; display: grid; grid-template-columns: 330px 330px; gap: 20px; }
.card { height: 180px; border: 1px solid #ddd; display: flex; flex-direction: column; }
.card header { height: 25px; flex: none; padding: 0 5px 2px 10px; display: flex; align-items: center; gap: 7px; border-bottom: 1px solid transparent; font-size: 12px; font-weight: 700; color: #404040; letter-spacing: -.2px; }
.card .lined { border-color: #ddd; }
.card header span { margin-right: auto; }
.grid { fill: none; stroke: #c4c4c4; stroke-dasharray: 1 1; }
.over { stroke: rgba(0,0,0,.26); }
.axis { fill: none; stroke: #9b9b9b; }
.yl { font: 11px "Liberation Sans", sans-serif; fill: #888; stroke: #888; stroke-width: .4px; }
.xl { font: 11px "Liberation Sans", sans-serif; fill: #999; }
.vt { font: 12px "Liberation Sans", sans-serif; fill: #999; }
.legend { display: grid; grid-template-columns: 135px 134px; column-gap: 13px; padding-left: 22px; font-size: 11px; line-height: 15px; color: #444; white-space: nowrap; }
.legend div { display: flex; align-items: center; height: 15px; letter-spacing: -.05px; }
.legend b { margin-left: auto; }
.legend-one { display: flex; align-items: center; height: 15px; padding-left: 22px; font-size: 11px; line-height: 15px; color: #444; white-space: nowrap; letter-spacing: -.22px; }
.legend-one b { margin-left: 6px; letter-spacing: 0; }
.grip { margin: 8px 4px 0 auto; }
.k { flex: none; width: 8px; height: 4px; margin: 1px 2px 0 0; }
.blue { background: #1f77b4; }
.green { background: #33a02c; }
.lblue { background: #a6cee3; }
.lgreen { background: #b2df8a; }
.scroll { width: 17px; padding: 7px 0 5px; background: #f0f0f0; border-left: 1px solid #e4e4e4; display: flex; flex-direction: column; align-items: center; }
.thumb { width: 15px; height: 455px; margin: 6px 0 auto; border: 1px solid #979797; border-radius: 2px; background: linear-gradient(90deg, #f5f5f5 40%, #cfcfcf 60%, #dcdcdc); display: flex; flex-direction: column; align-items: center; justify-content: center; gap: 2px; }
.thumb i { width: 7px; height: 1px; background: #666; }

/* Windows taskbar */
.taskbar { flex: none; height: 34px; position: relative; display: flex; align-items: center; color: #fff; border-top: 1px solid #38302c; box-shadow: inset 0 1px #a09188; background: linear-gradient(90deg, #5a4639 0, #4e3d34 60px, #8c7767 76px, #5c4940 130px, #7a6353 165px, #715847 195px, #77695f 250px, #806c63 480px, #75655f 720px, #786760 900px, #54463f 960px, #3f3430 1020px, #554842 1090px, #3e2e26 1210px, #443228 1300px, #362820 1366px); }
.taskbar > * { flex: none; }
.start { align-self: flex-start; margin: -6px 11px 0 8px; position: relative; }
.dots { width: 8px; height: 26px; background: radial-gradient(circle at 1px 1px, #2c231f 1px, transparent 1.3px) 0 0/3px 4px; }
.task { height: 30px; margin: -3px 0 0 3px; border: 1px solid #3e342e; border-radius: 3px; box-shadow: inset 0 0 0 1px rgba(255,255,255,.4); background: linear-gradient(165deg, rgba(255,255,255,.5), rgba(255,255,255,.17) 50%, rgba(255,255,255,.08) 52%); display: flex; align-items: center; justify-content: center; }
.taskbar .t1 { width: 43px; margin-left: 11px; }
.qq { margin: -2px 17px 0 14px; }
.taskbar .t3 { width: 38px; margin-left: 0; }
.lit { background: linear-gradient(165deg, rgba(255,255,255,.8), rgba(255,255,255,.45) 50%, rgba(255,255,255,.3) 52%); }
.t4 { width: 44px; }
.wechat { background: linear-gradient(165deg, #ffec91, #fac443 48%, #f09a24 52%, #ed832a); }
.t5 { width: 35px; }
.t6 { width: 43px; }
.t7 { width: 38px; }
.taskbar .t8 { width: 43px; margin-left: 4px; }
.t9, .t10 { width: 43px; }
.edge { width: 4px; height: 30px; margin-top: -3px; border: 1px solid #4b4039; border-left-color: #a89b92; border-radius: 0 3px 3px 0; }
.app { width: 16px; height: 16px; border-radius: 2px; display: flex; align-items: center; justify-content: center; font: bold 9px/16px "Liberation Sans", sans-serif; }
.mp { background: #12659d; border-radius: 0; letter-spacing: -.5px; }
.wps { background: #439cf7; }
.s { background: #17c64a; }
.right { margin-left: 414px; }
.sogou { width: 15px; height: 15px; margin: -4px 0 0 9px; border: 1px solid #f8d8c9; background: #ee5324; font: bold 14px/13px "Liberation Sans", sans-serif; text-align: center; }
.help { margin: -4px 0 0 8px; }
.q { font: bold 11px "Liberation Sans", sans-serif; fill: #fff; }
.lang { margin: -7px 0 0 10px; }
.temp { width: 72px; margin: -1px 9px 0 10px; text-align: center; font: 12px/17px "Noto Sans", "Noto Sans CJK SC", sans-serif; }
.tray { display: flex; align-items: center; gap: 8.5px; }
.tray > svg:first-child { margin-right: 4.5px; }
.time { margin-left: 29.5px; font: 12px/20px "Noto Sans", sans-serif; }
.peek { width: 13px; height: 32px; margin-left: auto; margin-right: 1px; border: 1px solid #1d1613; box-shadow: inset 0 0 0 1px #7b6d65; background: linear-gradient(135deg, #8b7d74, #453830 60%); }

/* floating network monitor */
.monitor { position: absolute; left: 724px; top: 629px; width: 127px; height: 48px; display: flex; align-items: center; }
.monitor::before { content: ""; position: absolute; left: 24px; top: 5px; width: 102px; height: 39px; border: 1px solid #909090; border-radius: 0 20px 20px 0; background: linear-gradient(#f1f1f1, #d8d8d8); box-shadow: 1px 3px 6px rgba(0,0,0,.45); }
.monitor > * { position: relative; }
.ball { filter: drop-shadow(0 2px 3px rgba(0,0,0,.5)); }
.pct { width: 48px; margin: -2px 0 0 -48px; text-align: center; color: #fff; font: 14px/20px "Liberation Sans", sans-serif; letter-spacing: .3px; padding-right: 2px; }
.rates { width: 50px; margin: 2px 0 0 4px; font: 10px/15px "Noto Sans", sans-serif; color: #111; letter-spacing: -.35px; }
.rates span { display: flex; align-items: center; justify-content: space-between; padding-right: 4px; }
.side-handle { position: absolute; right: 0; top: 425px; width: 10px; height: 60px; border: 1px solid #222; border-radius: 3px 0 0 3px; background: linear-gradient(90deg, #30343b 20%, #6e7681 40% 55%, #343942 70%); }
```
